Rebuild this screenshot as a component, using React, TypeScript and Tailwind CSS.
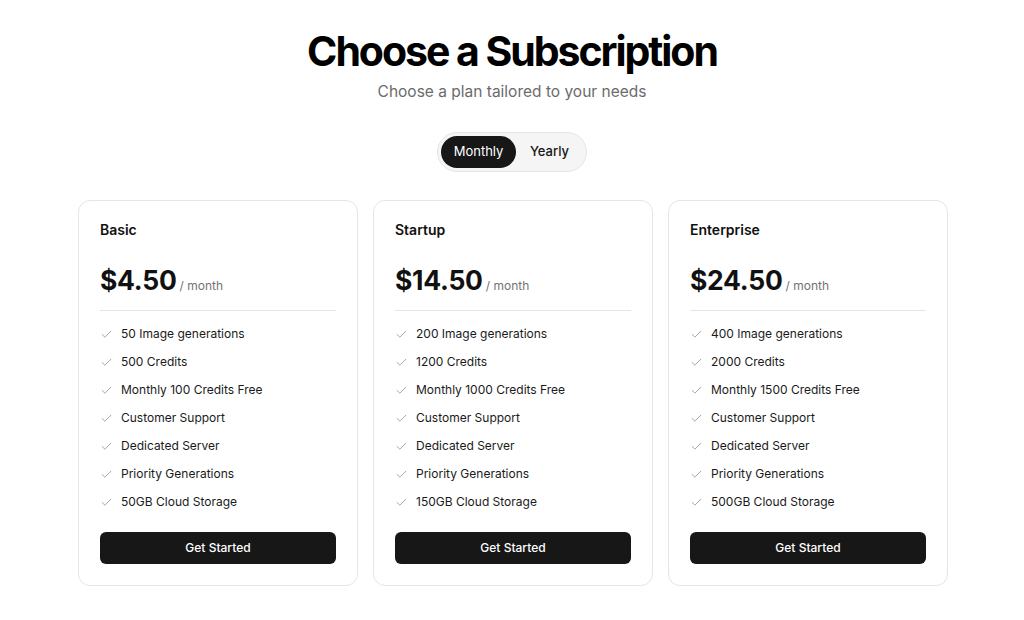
import React from "react";

const plans = [
  {
    name: "Basic",
    price: "$4.50",
    features: ["50 Image generations", "500 Credits", "Monthly 100 Credits Free", "Customer Support", "Dedicated Server", "Priority Generations", "50GB Cloud Storage"],
  },
  {
    name: "Startup",
    price: "$14.50",
    features: ["200 Image generations", "1200 Credits", "Monthly 1000 Credits Free", "Customer Support", "Dedicated Server", "Priority Generations", "150GB Cloud Storage"],
  },
  {
    name: "Enterprise",
    price: "$24.50",
    features: ["400 Image generations", "2000 Credits", "Monthly 1500 Credits Free", "Customer Support", "Dedicated Server", "Priority Generations", "500GB Cloud Storage"],
  },
];

function Check() {
  return (
    <svg width="13" height="13" viewBox="0 0 24 24" fill="none" stroke="#9ca3af" strokeWidth="1.8" strokeLinecap="round" strokeLinejoin="round">
      <path d="M20 6 9 17l-5-5" />
    </svg>
  );
}

export default function App() {
  return (
    <div className="min-h-[620px] bg-white text-[#111] font-['Inter',sans-serif] pt-[27px]">
      <h1 className="text-center text-[41px] leading-[48px] font-bold tracking-[-0.05em] text-black">Choose a Subscription</h1>
      <p className="text-center text-[15.5px] leading-[22px] text-[#6b6b6b] mt-[6px]">Choose a plan tailored to your needs</p>
      <div className="flex justify-center mt-[29px]">
        <div className="flex items-center rounded-full border border-[#e5e5e5] bg-[#f5f5f5] p-[3px] h-[40px]">
          <div className="rounded-full bg-[#171717] text-white text-[13px] h-[32px] w-[75px] flex items-center justify-center">Monthly</div>
          <div className="text-[13px] font-medium text-[#171717] h-[32px] w-[67px] flex items-center justify-center">Yearly</div>
        </div>
      </div>
      <div className="mx-auto mt-[28px] w-[870px] grid grid-cols-3 gap-[15px] translate-x-[1px]">
        {plans.map((p) => (
          <div key={p.name} className="rounded-[12px] border border-[#e5e5e5] bg-white px-[21px] pt-[20px] pb-[21px] h-[386px] flex flex-col">
            <div className="text-[14px] font-semibold leading-[18px] text-[#111]">{p.name}</div>
            <div className="flex items-baseline mt-[22px] h-[40px]">
              <span className="text-[26.5px] font-bold tracking-[-0.01em] text-[#111]">{p.price}</span>
              <span className="text-[12px] text-[#737373] ml-[3px]">/ month</span>
            </div>
            <div className="border-t border-[#e5e5e5] mt-[9px]" />
            <ul className="mt-[9px] flex flex-col">
              {p.features.map((f) => (
                <li key={f} className="flex items-center gap-[8px] h-[28px] text-[12px] text-[#1a1a1a]">
                  <Check />
                  <span>{f}</span>
                </li>
              ))}
            </ul>
            <button className="mt-auto h-[32px] w-full rounded-[6px] bg-[#171717] text-white text-[12px] font-medium">Get Started</button>
          </div>
        ))}
      </div>
    </div>
  );
}
